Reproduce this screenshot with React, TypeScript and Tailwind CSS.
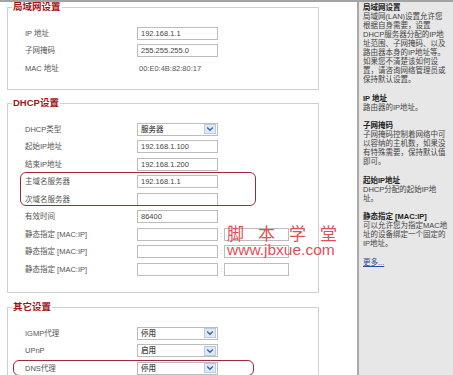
import type { ReactNode } from 'react';

const box = 'h-[13px] border border-[#bcbcbc] bg-white px-[3px] text-[7.5px] leading-[11px] text-[#444]';

function Chevron() {
    return (
        <span className="flex h-[10px] w-[12px] items-center justify-center border border-[#b9cbe2] bg-[#dfe9f6]">
            <svg width="8" height="6" viewBox="0 0 8 6">
                <path d="M1.2 1.5 L4 4.3 L6.8 1.5" fill="none" stroke="#3d63a3" strokeWidth="1.4" />
            </svg>
        </span>
    );
}

function Row({ label, children }: { label: string; children?: ReactNode }) {
    return (
        <div className="flex h-[17.5px] items-center">
            <div className="w-[112px] text-[7.5px] text-[#555]">{label}</div>
            {children}
        </div>
    );
}

function Input({ value = '', w = 'w-[81px]' }: { value?: string; w?: string }) {
    return <div className={`${box} ${w}`}>{value}</div>;
}

function Select({ value }: { value: string }) {
    return (
        <div className={`${box} flex w-[81px] items-center justify-between pr-[1px] font-medium text-[#333]`}>
            <span>{value}</span>
            <Chevron />
        </div>
    );
}

function Static() {
    return (
        <Row label="静态指定 [MAC:IP]">
            <Input />
            <span className="w-[6px] text-center text-[7px] leading-[11px] text-[#aaa]">:</span>
            <Input w="w-[65px]" />
        </Row>
    );
}

function Group({ title, children, className = '', pb = 'pb-3' }: { title: string; children: ReactNode; className?: string; pb?: string }) {
    return (
        <fieldset className={`w-[312px] border border-[#cfcfcf] ${className}`}>
            <legend className="ml-[4px] bg-white px-[1px] text-[9.5px] font-bold leading-[10px] text-[#a31515]">{title}</legend>
            <div className={`pl-[17px] pt-[12.5px] ${pb}`}>{children}</div>
        </fieldset>
    );
}

function Help({ title, lines, first = false }: { title: string; lines: string[]; first?: boolean }) {
    return (
        <div className={first ? '' : 'mt-[9.5px]'}>
            <div className="font-bold text-[#222]">{title}</div>
            {lines.map((l) => (
                <div key={l} className="whitespace-nowrap text-[#444]">{l}</div>
            ))}
        </div>
    );
}

export default function App() {
    return (
        <div className="relative flex h-[375px] w-[453px] overflow-hidden border-t-2 border-[#a3a3a3] bg-white font-['Liberation_Sans','Noto_Sans_CJK_SC',sans-serif]">
            <main className="w-[357px] pl-[7px]">
                <Group title="局域网设置">
                    <Row label="IP 地址"><Input value="192.168.1.1" /></Row>
                    <Row label="子网掩码"><Input value="255.255.255.0" /></Row>
                    <Row label="MAC 地址">
                        <span className="pl-[2px] text-[7.5px] text-[#555]">00:E0:4B:82:80:17</span>
                    </Row>
                </Group>

                <Group title="DHCP设置" className="mt-2" pb="pb-[14px]">
                    <Row label="DHCP类型"><Select value="服务器" /></Row>
                    <Row label="起始IP地址"><Input value="192.168.1.100" /></Row>
                    <Row label="结束IP地址"><Input value="192.168.1.200" /></Row>
                    <div className="relative">
                        <Row label="主域名服务器"><Input value="192.168.1.1" /></Row>
                        <Row label="次域名服务器"><Input /></Row>
                        <div className="pointer-events-none absolute -left-[5px] -top-[1px] h-[34px] w-[236px] rounded-[6px] border-[1.5px] border-[#9c2a3a]" />
                    </div>
                    <Row label="有效时间"><Input value="86400" /></Row>
                    <Static />
                    <Static />
                    <Static />
                </Group>

                <Group title="其它设置" className="mt-[9px]">
                    <Row label="IGMP代理"><Select value="停用" /></Row>
                    <Row label="UPnP"><Select value="启用" /></Row>
                    <div className="relative">
                        <Row label="DNS代理"><Select value="停用" /></Row>
                        <div className="pointer-events-none absolute -left-[12px] top-0 h-[16.5px] w-[241px] rounded-[6px] border-[1.5px] border-[#9c2a3a]" />
                    </div>
                </Group>
            </main>

            <aside className="w-[96px] border-l-2 border-[#a8a8a8] bg-[#e7e7e7] pl-[4px] pt-[1px] text-[7.5px] leading-[9px]">
                <Help
                    first
                    title="局域网设置"
                    lines={[
                        '局域网(LAN)设置允许您',
                        '根据自身需要，设置',
                        'DHCP服务器分配的IP地',
                        '址范围、子网掩码、以及',
                        '路由器本身的IP地址等。',
                        '如果您不清楚该如何设',
                        '置，请咨询网络管理员或',
                        '保持默认设置。',
                    ]}
                />
                <Help title="IP 地址" lines={['路由器的IP地址。']} />
                <Help
                    title="子网掩码"
                    lines={['子网掩码控制着网络中可', '以容纳的主机数，如果没', '有特殊需要，保持默认值', '即可。']}
                />
                <Help title="起始IP地址" lines={['DHCP分配的起始IP地', '址。']} />
                <Help
                    title="静态指定 [MAC:IP]"
                    lines={['可以允许您为指定MAC地', '址的设备绑定一个固定的', 'IP地址。']}
                />
                <div className="mt-[9.5px] text-[#2a4ea0] underline">更多...</div>
            </aside>

            {/* site watermark stamped over the screenshot */}
            <div className="pointer-events-none absolute left-[227px] top-[221px] text-[#e0505a]">
                <div className="font-['Noto_Sans_CJK_SC',sans-serif] text-[17px] leading-[19px] tracking-[14px]">脚本学堂</div>
                <div className="text-[15.5px] leading-[16px]">www.jbxue.com</div>
            </div>
        </div>
    );
}
